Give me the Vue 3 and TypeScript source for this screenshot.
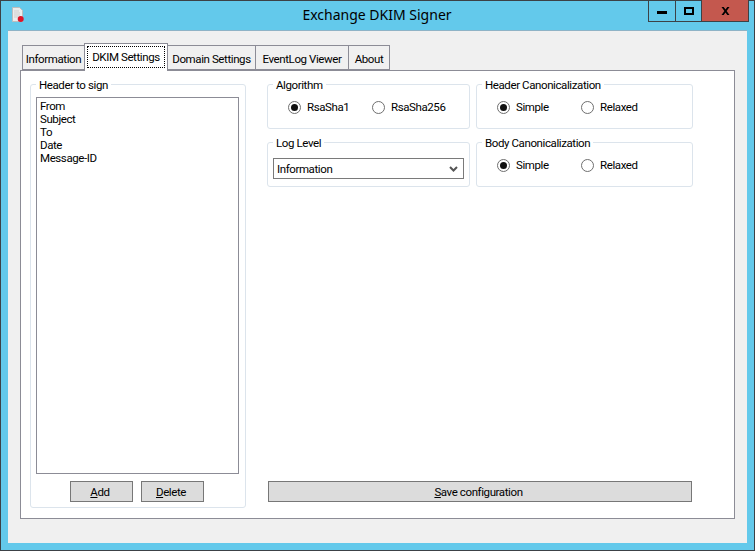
<script setup lang="ts">
const tabs = ['Information', 'DKIM Settings', 'Domain Settings', 'EventLog Viewer', 'About']
const tabWidths = [63, 84, 89, 94, 42]
const headers = ['From', 'Subject', 'To', 'Date', 'Message-ID']
</script>

<template>
  <div class="window">
    <header class="titlebar">
      <svg class="app-icon" width="14" height="16" viewBox="0 0 14 16">
        <path d="M1.5 0.5h7l3 3v11h-10z" fill="#ececec" stroke="#bdbdbd" />
        <path d="M3 4h5M3 6h6M3 8h6M3 10h4" stroke="#cfcfcf" />
        <circle cx="9.7" cy="12" r="3" fill="#dc1428" />
      </svg>
      <span class="title">Exchange DKIM Signer</span>
      <div class="controls">
        <div class="ctl ctl-min"><span class="min-glyph"></span></div>
        <div class="ctl ctl-max"><span class="max-glyph"></span></div>
        <div class="ctl ctl-close">
          <svg width="9" height="8" viewBox="0 0 9 8">
            <path d="M0.5 0h2.2L4.5 2.4 6.3 0h2.2L5.6 4l2.9 4H6.3L4.5 5.6 2.7 8H0.5l2.9-4z" fill="#000" />
          </svg>
        </div>
      </div>
    </header>

    <main class="client">
      <nav class="tabstrip">
        <div
          v-for="(tab, i) in tabs"
          :key="tab"
          class="tab"
          :class="{ active: i === 1 }"
          :style="{ width: tabWidths[i] + 'px' }"
        >
          <span class="tab-label">{{ tab }}</span>
        </div>
      </nav>

      <section class="panel">
        <div class="group headers">
          <span class="caption">Header to sign</span>
          <ul class="listbox">
            <li v-for="h in headers" :key="h">{{ h }}</li>
          </ul>
          <div class="list-buttons">
            <button class="btn small"><u>A</u>dd</button>
            <button class="btn small"><u>D</u>elete</button>
          </div>
        </div>

        <div class="right">
          <div class="settings">
            <div class="group option algo">
              <span class="caption">Algorithm</span>
              <div class="radios">
                <label class="radio r1"><i class="dot on"></i>RsaSha1</label>
                <label class="radio"><i class="dot"></i>RsaSha256</label>
              </div>
            </div>
            <div class="group option canon">
              <span class="caption">Header Canonicalization</span>
              <div class="radios">
                <label class="radio r2"><i class="dot on"></i>Simple</label>
                <label class="radio"><i class="dot"></i>Relaxed</label>
              </div>
            </div>
            <div class="group option algo">
              <span class="caption">Log Level</span>
              <div class="combo">
                <span>Information</span>
                <svg width="9" height="6" viewBox="0 0 9 6">
                  <path d="M1 1l3.5 3.5L8 1" fill="none" stroke="#555" stroke-width="2" />
                </svg>
              </div>
            </div>
            <div class="group option canon">
              <span class="caption">Body Canonicalization</span>
              <div class="radios">
                <label class="radio r2"><i class="dot on"></i>Simple</label>
                <label class="radio"><i class="dot"></i>Relaxed</label>
              </div>
            </div>
          </div>
          <button class="btn save"><u>S</u>ave configuration</button>
        </div>
      </section>
    </main>
  </div>
</template>

<style>
html,
body {
  margin: 0;
  overflow: hidden;
}
</style>

<style scoped>
.window {
  box-sizing: border-box;
  width: 755px;
  height: 551px;
  display: flex;
  flex-direction: column;
  background: #63c9eb;
  border: 1px solid #3c4146;
  font-family: Roboto, 'Noto Sans', sans-serif;
  font-size: 11.5px;
  letter-spacing: -0.4px;
  color: #000;
}

.titlebar {
  position: relative;
  height: 29px;
  flex: none;
  display: flex;
  justify-content: center;
  padding-top: 4px;
  box-sizing: border-box;
}

.app-icon {
  position: absolute;
  left: 10px;
  top: 6px;
}

.title {
  font-family: 'Noto Sans', sans-serif;
  font-size: 14px;
  letter-spacing: 0;
  line-height: 20px;
  margin-right: 1px;
}

/* caption buttons hang from the top edge of the frame */
.controls {
  position: absolute;
  top: -1px;
  left: 647px;
  display: flex;
  height: 22px;
  border: 1px solid #3c4146;
  border-top: 0;
  box-sizing: border-box;
}

.ctl {
  display: flex;
  align-items: center;
  justify-content: center;
  box-sizing: border-box;
}

.ctl-min {
  width: 27px;
  border-right: 1px solid #3c4146;
}

.ctl-max {
  width: 26px;
  border-right: 1px solid #3c4146;
}

.ctl-close {
  width: 46px;
  background: #c4584e;
}

.min-glyph {
  width: 10px;
  height: 3px;
  background: #000;
  margin-top: 4px;
}

.max-glyph {
  box-sizing: border-box;
  width: 10px;
  height: 8px;
  border: 2px solid #000;
}

.client {
  flex: none;
  box-sizing: border-box;
  width: 739px;
  height: 513px;
  margin-left: 7px;
  background: #f0f0f0;
  border-top: 1px solid #8fb3c6;
  padding: 12px 12px 0;
  display: flex;
  flex-direction: column;
}

.tabstrip {
  display: flex;
  align-items: flex-end;
  height: 28px;
  padding-left: 2px;
  position: relative;
  z-index: 1;
  margin-bottom: -1px;
}

.tab {
  box-sizing: border-box;
  height: 25px;
  border: 1px solid #8c8c96;
  margin-right: -1px;
  background: #f0f0f0;
  text-align: center;
  line-height: 27px;
  margin-bottom: 1px;
  white-space: nowrap;
}

.tab.active {
  height: 28px;
  margin-bottom: 0;
  background: #fff;
  border-bottom: 0;
  padding: 2px 2px 0;
  position: relative;
  z-index: 2;
}

.tab.active .tab-label {
  display: block;
  height: 22px;
  line-height: 23px;
  outline: 1px dotted #000;
  outline-offset: -1px;
}

.panel {
  box-sizing: border-box;
  width: 715px;
  height: 449px;
  background: #fff;
  border: 1px solid #8c8c96;
  padding: 13px 0 0 9px;
  display: flex;
}

.group {
  position: relative;
  box-sizing: border-box;
  border: 1px solid #dce4ec;
  border-radius: 3px;
}

.caption {
  position: absolute;
  top: -7px;
  left: 5px;
  padding: 0 3px;
  background: #fff;
  line-height: 15px;
  white-space: nowrap;
}

.headers {
  width: 216px;
  height: 424px;
  padding: 12px 6px 0 5px;
}

.listbox {
  box-sizing: border-box;
  height: 377px;
  width: 203px;
  margin: 0;
  padding: 2px 3px;
  list-style: none;
  border: 1px solid #8c8c96;
  line-height: 13px;
}

.list-buttons {
  display: flex;
  justify-content: center;
  gap: 8px;
  margin-top: 7px;
  padding-right: 1px;
}

.btn {
  box-sizing: border-box;
  height: 21px;
  padding: 0 3px 0 0;
  border: 1px solid #777;
  background: #dcdcdc;
  font: inherit;
  letter-spacing: inherit;
  color: inherit;
}

.btn.small {
  width: 63px;
}

.right {
  margin-left: 21px;
  width: 426px;
  display: flex;
  flex-direction: column;
}

.settings {
  display: grid;
  grid-template-columns: 203px 217px;
  grid-auto-rows: 45px;
  column-gap: 6px;
  row-gap: 13px;
  height: 397px;
}

.radios {
  display: flex;
  padding: 14px 0 0 20px;
}

.radio {
  display: flex;
  align-items: center;
  line-height: 16px;
}

.r1,
.r2 {
  width: 84px;
}

.dot {
  box-sizing: border-box;
  width: 13px;
  height: 13px;
  margin-right: 6px;
  border: 1px solid #6f6f6f;
  border-radius: 50%;
  background: #fff;
  position: relative;
}

.dot.on::after {
  content: '';
  position: absolute;
  inset: 2px;
  border-radius: 50%;
  background: #111;
}

.combo {
  box-sizing: border-box;
  margin: 15px 5px 0 5px;
  height: 21px;
  border: 1px solid #7a7a7a;
  display: flex;
  align-items: center;
  justify-content: space-between;
  padding: 0 5px 0 3px;
}

.save {
  width: 424px;
  margin-left: 1px;
}
</style>
